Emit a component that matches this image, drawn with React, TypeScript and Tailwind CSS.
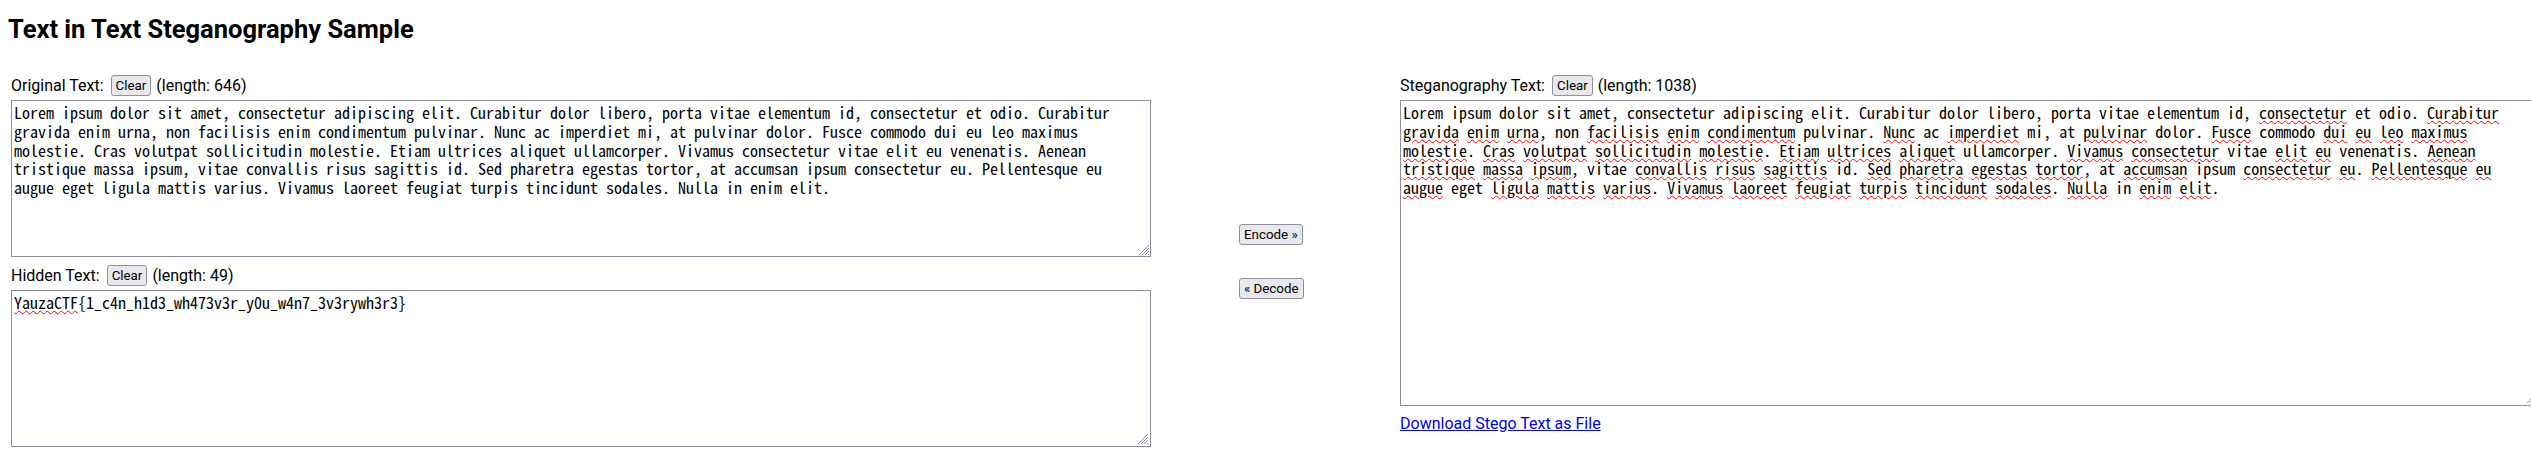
import React from "react";

// textarea text: half-width CJK mono gives 8px per char at 16px, like the reference
const mono =
  "font-['Noto_Sans_Mono_CJK_JP','Liberation_Mono',monospace] text-[16px] leading-[18.75px] text-black";

const btn =
  "h-[21px] px-[4px] border border-[#8f8f9d] rounded-[3px] bg-[#e9e9ed] text-[13.33px] leading-[17px] text-black font-['Roboto',sans-serif] whitespace-nowrap";

const box = "border border-[#8f8f9d] p-[2px] bg-white";

const ORIGINAL =
  "Lorem ipsum dolor sit amet, consectetur adipiscing elit. Curabitur dolor libero, porta vitae elementum id, consectetur et odio. Curabitur gravida enim urna, non facilisis enim condimentum pulvinar. Nunc ac imperdiet mi, at pulvinar dolor. Fusce commodo dui eu leo maximus molestie. Cras volutpat sollicitudin molestie. Etiam ultrices aliquet ullamcorper. Vivamus consectetur vitae elit eu venenatis. Aenean tristique massa ipsum, vitae convallis risus sagittis id. Sed pharetra egestas tortor, at accumsan ipsum consectetur eu. Pellentesque eu augue eget ligula mattis varius. Vivamus laoreet feugiat turpis tincidunt sodales. Nulla in enim elit.";

// words between ~ ~ get the spell-check squiggle
const HIDDEN = "~YauzaCTF~{1_c4n_h1d3_wh473v3r_y0u_w4n7_3v3rywh3r3}";

const STEGO = [
  "Lorem ipsum dolor sit amet, consectetur adipiscing elit. Curabitur dolor libero, porta vitae elementum id, ~consectetur~ et odio. ~Curabitur~",
  "~gravida~ ~enim~ ~urna~, non ~facilisis~ ~enim~ ~condimentum~ pulvinar. ~Nunc~ ac ~imperdiet~ mi, at ~pulvinar~ dolor. ~Fusce~ commodo ~dui~ ~eu~ ~leo~ ~maximus~",
  "~molestie~. ~Cras~ ~volutpat~ ~sollicitudin~ ~molestie~. ~Etiam~ ~ultrices~ ~aliquet~ ullamcorper. ~Vivamus~ ~consectetur~ vitae ~elit~ ~eu~ venenatis. ~Aenean~",
  "~tristique~ ~massa~ ~ipsum~, vitae ~convallis~ ~risus~ ~sagittis~ id. ~Sed~ ~pharetra~ ~egestas~ ~tortor~, at ~accumsan~ ipsum ~consectetur~ ~eu~. ~Pellentesque~ ~eu~",
  "~augue~ eget ~ligula~ ~mattis~ ~varius~. ~Vivamus~ ~laoreet~ ~feugiat~ ~turpis~ ~tincidunt~ ~sodales~. ~Nulla~ in ~enim~ ~elit~.",
].join(" ");

const Marked: React.FC<{ text: string }> = ({ text }) => (
  <>
    {text.split("~").map((part, i) =>
      i % 2 ? (
        <span
          key={i}
          className="underline decoration-wavy decoration-[#ff0000] decoration-1 underline-offset-[1px]"
        >
          {part}
        </span>
      ) : (
        <React.Fragment key={i}>{part}</React.Fragment>
      )
    )}
  </>
);

const Grip = () => (
  <svg
    className="absolute right-[1px] bottom-[1px] pointer-events-none"
    width="12"
    height="12"
    viewBox="0 0 12 12"
  >
    <path
      d="M11 1L1 11M11 4L4 11M11 7L7 11M11 10L10 11"
      stroke="#9a9aa6"
      strokeWidth="1"
    />
  </svg>
);

const LabelRow: React.FC<{ label: string; length: number }> = ({
  label,
  length,
}) => (
  <div className="flex items-center h-[21px] text-[16px] leading-[21px] whitespace-nowrap">
    <span>{label}</span>
    <button className={`${btn} ml-[7px]`}>Clear</button>
    <span className="ml-[5px]">(length: {length})</span>
  </div>
);

const App: React.FC = () => {
  return (
    <div className="min-h-screen w-full overflow-hidden bg-white text-black font-['Roboto','Noto_Sans_CJK_JP',sans-serif]">
      <h1 className="pl-[8px] pt-[14px] text-[25.5px] leading-[30px] font-bold">
        Text in Text Steganography Sample
      </h1>

      <div className="flex mt-[31px] pl-[11px]">
        {/* Left column */}
        <div className="w-[1140px] shrink-0">
          <LabelRow label="Original Text:" length={646} />
          <div className="relative mt-[4px] h-[157px]">
            <textarea
              readOnly
              value={ORIGINAL}
              className={`block w-full h-full resize-none outline-none ${box} ${mono}`}
            />
            <Grip />
          </div>

          <div className="mt-[8px]">
            <LabelRow label="Hidden Text:" length={49} />
          </div>
          <div
            className={`relative mt-[4px] h-[157px] whitespace-pre-wrap break-words ${box} ${mono}`}
          >
            <Marked text={HIDDEN} />
            <Grip />
          </div>
        </div>

        {/* Middle buttons */}
        <div className="w-[249px] shrink-0 pl-[88px] flex flex-col justify-center items-start gap-[33px]">
          <button className={btn}>Encode »</button>
          <button className={btn}>« Decode</button>
        </div>

        {/* Right column */}
        <div className="w-[1140px] shrink-0">
          <LabelRow label="Steganography Text:" length={1038} />
          <div
            className={`relative mt-[4px] h-[306px] whitespace-pre-wrap break-words ${box} ${mono}`}
          >
            <Marked text={STEGO} />
            <Grip />
          </div>
          <a
            href="#"
            className="block w-fit mt-[8px] text-[16px] leading-[20px] text-[#0000ee] underline"
          >
            Download Stego Text as File
          </a>
        </div>
      </div>
    </div>
  );
};

export default App;
